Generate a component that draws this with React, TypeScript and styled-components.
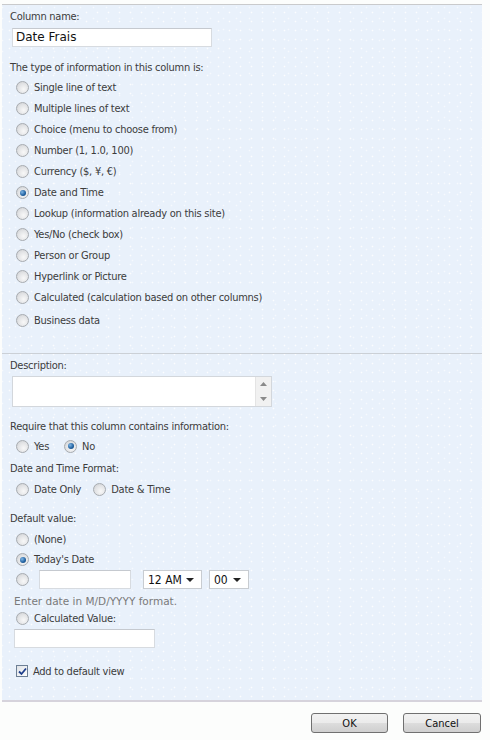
import styled, { createGlobalStyle } from "styled-components";

const GlobalStyle = createGlobalStyle`
  html, body {
    margin: 0;
    padding: 0;
    background: #fcfdfc;
  }
  body {
    font-family: "DejaVu Sans Condensed", "DejaVu Sans", sans-serif;
    font-size: 11px;
    letter-spacing: -0.25px;
    color: #3c3c3c;
  }
`;

const Page = styled.div`
  width: 490px;
  height: 740px;
  padding: 4px 0 0 2px;
  box-sizing: border-box;
  display: flex;
  flex-direction: column;
`;

const Panel = styled.div`
  width: 480px;
  border-top: 1px solid #c9cacc;
  background-color: #e9f1fb;
  background-image: radial-gradient(circle, rgba(255, 255, 255, 0.85) 0.7px, transparent 1.1px),
    radial-gradient(circle, rgba(255, 255, 255, 0.6) 0.7px, transparent 1.1px);
  background-size: 11px 9px, 13px 11px;
  background-position: 2px 3px, 7px 8px;
  border-bottom: 2px solid #d6d3dc;
`;

const Section = styled.div<{ $top: number; $bottom: number }>`
  padding: ${(p) => p.$top}px 8px ${(p) => p.$bottom}px 8px;
  & + & {
    border-top: 1px solid #cbd0d6;
  }
`;

const Label = styled.div<{ $mt?: number }>`
  height: 14px;
  line-height: 14px;
  margin-top: ${(p) => p.$mt ?? 0}px;
  white-space: nowrap;
`;

const TextBox = styled.div<{ $w: number; $ml?: number; $mt?: number }>`
  width: ${(p) => p.$w}px;
  height: 19px;
  margin-left: ${(p) => p.$ml ?? 0}px;
  margin-top: ${(p) => p.$mt ?? 0}px;
  box-sizing: border-box;
  background: #fff;
  border: 1px solid #d7dbe0;
  border-top-color: #c5c9cf;
  font-family: "DejaVu Sans", sans-serif;
  font-size: 12px;
  letter-spacing: 0;
  color: #111;
  line-height: 17px;
  padding-left: 3px;
`;

const Options = styled.div`
  margin-top: 2px;
`;

const OptionRow = styled.div<{ $h?: number; $mt?: number }>`
  height: ${(p) => p.$h ?? 21}px;
  margin-top: ${(p) => p.$mt ?? 0}px;
  display: flex;
  align-items: center;
  padding-left: 6px;
  white-space: nowrap;
`;

const Option = styled.label<{ $mr?: number }>`
  display: flex;
  align-items: center;
  gap: 5px;
  margin-right: ${(p) => p.$mr ?? 0}px;
`;

const RadioDot = styled.span<{ $on?: boolean }>`
  width: 13px;
  height: 13px;
  box-sizing: border-box;
  border-radius: 50%;
  border: 1px solid #a7abb0;
  background: radial-gradient(circle at 60% 65%, #f8f8f8 0%, #e2e3e5 55%, #c9cbce 100%);
  display: flex;
  align-items: center;
  justify-content: center;
  flex-shrink: 0;
  &::after {
    content: "";
    display: ${(p) => (p.$on ? "block" : "none")};
    width: 6px;
    height: 6px;
    border-radius: 50%;
    background: radial-gradient(circle at 35% 35%, #7fb6e6 0%, #1f5f9e 60%, #0d3f72 100%);
  }
`;

const Radio = ({ label, on, mr }: { label?: string; on?: boolean; mr?: number }) => (
  <Option $mr={mr}>
    <RadioDot $on={on} />
    {label && <span>{label}</span>}
  </Option>
);

const TextArea = styled.div`
  width: 260px;
  height: 31px;
  margin: 3px 0 0 2px;
  box-sizing: border-box;
  background: #fff;
  border: 1px solid #d3d7dc;
  display: flex;
  justify-content: flex-end;
`;

const ScrollBar = styled.div`
  width: 15px;
  background: #f1f1f1;
  border-left: 1px solid #e4e4e4;
  display: flex;
  flex-direction: column;
  justify-content: space-between;
  align-items: center;
  padding: 5px 0;
`;

const Hint = styled.div`
  height: 14px;
  line-height: 14px;
  margin: 5px 0 0 4px;
  font-family: "DejaVu Sans", sans-serif;
  font-size: 10.5px;
  letter-spacing: 0;
  color: #7a7a7a;
`;

const Select = styled.div<{ $w: number; $ml: number }>`
  width: ${(p) => p.$w}px;
  height: 19px;
  margin-left: ${(p) => p.$ml}px;
  box-sizing: border-box;
  background: #fff;
  border: 1px solid #c8ccd1;
  display: flex;
  align-items: center;
  justify-content: space-between;
  padding: 0 7px 0 4px;
  font-family: "DejaVu Sans Condensed", "DejaVu Sans", sans-serif;
  font-size: 12px;
  letter-spacing: 0;
  color: #111;
`;

const CheckBox = styled.span`
  width: 12px;
  height: 12px;
  box-sizing: border-box;
  border: 1px solid #6d7f95;
  background: linear-gradient(135deg, #dfe3e8, #fdfdfd);
  display: flex;
  align-items: center;
  justify-content: center;
`;

const Footer = styled.div`
  flex: 1;
  display: flex;
  justify-content: flex-end;
  align-items: flex-start;
  gap: 15px;
  padding: 11px 9px 0 0;
`;

const Button = styled.button<{ $w: number }>`
  width: ${(p) => p.$w}px;
  height: 20px;
  border: 1px solid #707070;
  border-radius: 3px;
  background: linear-gradient(#f2f2f2 0%, #ebebeb 50%, #dddddd 51%, #cfcfcf 100%);
  font-family: "DejaVu Sans Condensed", "DejaVu Sans", sans-serif;
  font-size: 11px;
  color: #111;
  padding: 0;
`;

const Arrow = ({ up }: { up?: boolean }) => (
  <svg width="7" height="4" viewBox="0 0 7 4">
    <path d={up ? "M0 4 L3.5 0 L7 4 Z" : "M0 0 L3.5 4 L7 0 Z"} fill="#8a8a8a" />
  </svg>
);

const Caret = () => (
  <svg width="8" height="4" viewBox="0 0 8 4">
    <path d="M0 0 L4 4 L8 0 Z" fill="#222" />
  </svg>
);

const TYPES = [
  "Single line of text",
  "Multiple lines of text",
  "Choice (menu to choose from)",
  "Number (1, 1.0, 100)",
  "Currency ($, ¥, €)",
  "Date and Time",
  "Lookup (information already on this site)",
  "Yes/No (check box)",
  "Person or Group",
  "Hyperlink or Picture",
  "Calculated (calculation based on other columns)",
];

export default function App() {
  return (
    <>
      <GlobalStyle />
      <Page>
        <Panel>
          <Section $top={5} $bottom={22}>
            <Label>Column name:</Label>
            <TextBox $w={200} $ml={2} $mt={4}>
              Date Frais
            </TextBox>
            <Label $mt={14}>The type of information in this column is:</Label>
            <Options>
              {TYPES.map((t) => (
                <OptionRow key={t}>
                  <Radio label={t} on={t === "Date and Time"} />
                </OptionRow>
              ))}
              <OptionRow $mt={2}>
                <Radio label="Business data" />
              </OptionRow>
            </Options>
          </Section>
          <Section $top={5} $bottom={19}>
            <Label>Description:</Label>
            <TextArea>
              <ScrollBar>
                <Arrow up />
                <Arrow />
              </ScrollBar>
            </TextArea>
            <Label $mt={13}>Require that this column contains information:</Label>
            <OptionRow $h={20} $mt={2}>
              <Radio label="Yes" mr={15} />
              <Radio label="No" on />
            </OptionRow>
            <Label $mt={6}>Date and Time Format:</Label>
            <OptionRow $h={20} $mt={3}>
              <Radio label="Date Only" mr={12} />
              <Radio label="Date & Time" />
            </OptionRow>
            <Label $mt={13}>Default value:</Label>
            <OptionRow $h={20} $mt={3}>
              <Radio label="(None)" />
            </OptionRow>
            <OptionRow $h={21}>
              <Radio label="Today's Date" on />
            </OptionRow>
            <OptionRow $h={19}>
              <Radio />
              <TextBox $w={92} $ml={10} />
              <Select $w={59} $ml={12}>
                <span>12 AM</span>
                <Caret />
              </Select>
              <Select $w={40} $ml={7}>
                <span>00</span>
                <Caret />
              </Select>
            </OptionRow>
            <Hint>Enter date in M/D/YYYY format.</Hint>
            <OptionRow $h={20}>
              <Radio label="Calculated Value:" />
            </OptionRow>
            <TextBox $w={141} $ml={4} $mt={1} />
            <OptionRow $h={20} $mt={13}>
              <Option>
                <CheckBox>
                  <svg width="9" height="9" viewBox="0 0 9 9">
                    <path d="M1 4.5 L3.5 7 L8 1.5" stroke="#1f3f8c" strokeWidth="1.8" fill="none" />
                  </svg>
                </CheckBox>
                <span>Add to default view</span>
              </Option>
            </OptionRow>
          </Section>
        </Panel>
        <Footer>
          <Button $w={77}>OK</Button>
          <Button $w={78}>Cancel</Button>
        </Footer>
      </Page>
    </>
  );
}
